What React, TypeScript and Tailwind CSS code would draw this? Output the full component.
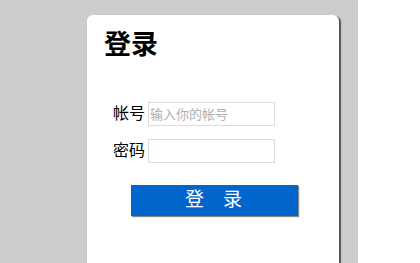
export default function App() {
  return (
    <div className="flex h-[263px] w-[420px] bg-white font-['Liberation_Sans','Noto_Sans_CJK_SC',sans-serif]">
      <div className="h-full w-[358px] bg-[#cccccc] pl-[87px] pt-[15px]">
        <div className="h-full w-[252px] rounded-t-[6px] bg-white shadow-[2px_1px_1px_#555]">
          <h1 className="pl-[17px] pt-[12px] text-[27px] font-bold leading-[36px] text-black">登录</h1>
          <div className="mt-[39px] flex flex-col gap-[13px]">
            <div className="flex items-center">
              <span className="w-[58px] text-right text-[16px] leading-[24px] text-black">帐号</span>
              <input
                className="ml-[3px] h-[24px] w-[127px] border border-[#dcdcdc] px-[1px] text-[13px] outline-none placeholder:text-[#b0b0b0]"
                placeholder="输入你的帐号"
              />
            </div>
            <div className="flex items-center">
              <span className="w-[58px] text-right text-[16px] leading-[24px] text-black">密码</span>
              <input
                type="password"
                className="ml-[3px] h-[24px] w-[127px] border border-[#dcdcdc] px-[1px] text-[13px] outline-none"
              />
            </div>
          </div>
          <div className="mt-[22px] pl-[44px]">
            <button className="h-[31px] w-[167px] bg-[#0066cc] text-[19px] tracking-[1em] text-white shadow-[1px_1px_1px_#888] indent-[0.9em]">
              登录
            </button>
          </div>
        </div>
      </div>
    </div>
  );
}
